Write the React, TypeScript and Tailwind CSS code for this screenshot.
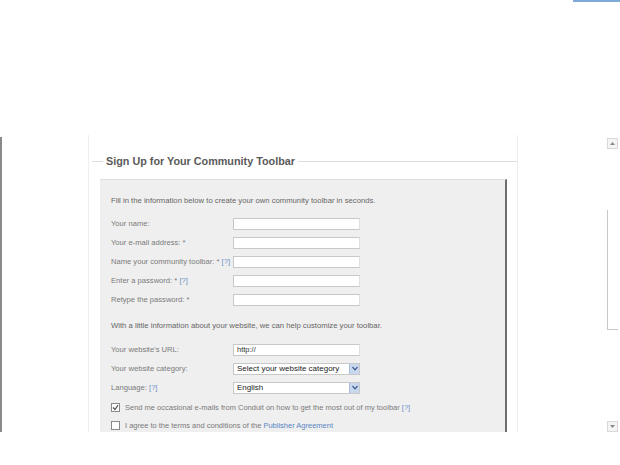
import React from "react";

const font = { fontFamily: '"Liberation Sans", Arial, sans-serif' };

function Input({ value }: { value?: string }) {
  return (
    <div className="w-[127px] h-[12px] bg-white border border-[#c8c8c8] border-r-[#e0e0e0] flex items-center px-[3px] text-[7.5px] text-[#333]">
      {value}
    </div>
  );
}

function Select({ value }: { value: string }) {
  return (
    <div className="w-[127px] h-[12px] bg-white border border-[#c8c8c8] flex items-center">
      <div className="flex-1 pl-[3px] text-[8px] text-[#222]">{value}</div>
      <div className="w-[10px] h-[10px] bg-[#c9d8ee] border-l border-[#a9bddc] flex items-center justify-center">
        <svg width="6" height="5" viewBox="0 0 6 5">
          <path d="M0.5 1 L3 3.8 L5.5 1" fill="none" stroke="#3a5a8c" strokeWidth="1.2" />
        </svg>
      </div>
    </div>
  );
}

function Row({ label, help, star, children }: { label: string; help?: boolean; star?: boolean; children: React.ReactNode }) {
  return (
    <div className="flex items-center h-[19px]">
      <div className="w-[122px] text-[7.6px] text-[#7a7a7a] whitespace-nowrap">
        {label}
        {star && <span> *</span>}
        {help && <span className="text-[#6a8fc8]"> [?]</span>}
      </div>
      {children}
    </div>
  );
}

export default function App() {
  return (
    <div className="w-[620px] h-[465px] bg-white overflow-hidden flex flex-col" style={font}>
      <div className="flex justify-end h-[3px]">
        <div className="w-[47px] h-[2px] bg-[#7ea9d6]" />
      </div>
      <div className="flex h-[297px] mt-[132px]">
        <div className="w-[2px] bg-[#8a8a8a] mt-[2px]" />
        <div className="w-[86px]" />
        <div className="w-[430px] border-l border-r border-[#eeeeee] flex flex-col">
          <div className="flex items-center mt-[19px] h-[14px]">
            <div className="w-[11px] h-px bg-[#dcdcdc] ml-[3px]" />
            <div className="px-[3px] text-[10.8px] font-bold text-[#5a5a5a] whitespace-nowrap">
              Sign Up for Your Community Toolbar
            </div>
            <div className="flex-1 h-px bg-[#dcdcdc]" />
          </div>
          <div className="ml-[11px] w-[407px] flex-1 mt-[11px] bg-[#efefef] border-t border-[#dedede] border-r-2 border-r-[#6e6e6e] pl-[11px] pt-[16px] flex flex-col">
            <div className="text-[7.7px] text-[#666] h-[10px] leading-[10px]">
              Fill in the information below to create your own community toolbar in seconds.
            </div>
            <div className="mt-[8px]">
              <Row label="Your name:">
                <Input />
              </Row>
              <Row label="Your e-mail address:" star>
                <Input />
              </Row>
              <Row label="Name your community toolbar:" star help>
                <Input />
              </Row>
              <Row label="Enter a password:" star help>
                <Input />
              </Row>
              <Row label="Retype the password:" star>
                <Input />
              </Row>
            </div>
            <div className="text-[7.7px] text-[#666] h-[10px] leading-[10px] mt-[12px]">
              With a little information about your website, we can help customize your toolbar.
            </div>
            <div className="mt-[9px]">
              <Row label="Your website's URL:">
                <Input value="http://" />
              </Row>
              <Row label="Your website category:">
                <Select value="Select your website category" />
              </Row>
              <Row label="Language:" help>
                <Select value="English" />
              </Row>
            </div>
            <div className="mt-[5px] flex flex-col gap-[7px]">
              <div className="flex items-center gap-[5px] text-[7.5px] text-[#7a7a7a]">
                <div className="w-[9px] h-[9px] border border-[#8a8a8a] bg-white flex items-center justify-center">
                  <svg width="7" height="7" viewBox="0 0 7 7">
                    <path d="M1 3.5 L3 5.5 L6 1.2" fill="none" stroke="#555" strokeWidth="1.2" />
                  </svg>
                </div>
                <span>
                  Send me occasional e-mails from Conduit on how to get the most out of my toolbar <span className="text-[#6a8fc8]">[?]</span>
                </span>
              </div>
              <div className="flex items-center gap-[5px] text-[7.5px] text-[#7a7a7a]">
                <div className="w-[9px] h-[9px] border border-[#8a8a8a] bg-white" />
                <span>
                  I agree to the terms and conditions of the <span className="text-[#5a86c4]">Publisher Agreement</span>
                </span>
              </div>
            </div>
          </div>
        </div>
        <div className="flex-1" />
        <div className="w-[11px] mr-[2px] flex flex-col mt-[3px]">
          <div className="h-[11px] border border-[#d8d8d8] bg-[#f4f4f4] flex items-center justify-center">
            <svg width="5" height="3" viewBox="0 0 5 3">
              <path d="M0 3 L2.5 0 L5 3 Z" fill="#888" />
            </svg>
          </div>
          <div className="h-[61px]" />
          <div className="h-[120px] border-l border-b border-[#c8c8c8] bg-white" />
          <div className="flex-1" />
          <div className="h-[11px] border border-[#d8d8d8] bg-[#f4f4f4] flex items-center justify-center">
            <svg width="5" height="3" viewBox="0 0 5 3">
              <path d="M0 0 L2.5 3 L5 0 Z" fill="#888" />
            </svg>
          </div>
        </div>
      </div>
    </div>
  );
}
